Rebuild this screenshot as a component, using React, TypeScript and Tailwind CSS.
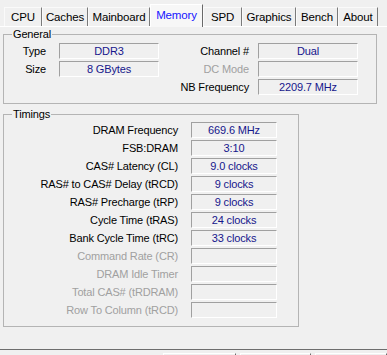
import * as React from "react";

const tabs = [
  { name: "CPU", w: "w-[38px]" },
  { name: "Caches", w: "w-[46px]" },
  { name: "Mainboard", w: "w-[62px]" },
  { name: "Memory", w: "w-[53px]", active: true },
  { name: "SPD", w: "w-[39px]" },
  { name: "Graphics", w: "w-[54px]" },
  { name: "Bench", w: "w-[42px]" },
  { name: "About", w: "w-[40px]" },
];

const general = [
  { left: "Type", leftValue: "DDR3", right: "Channel #", rightValue: "Dual" },
  { left: "Size", leftValue: "8 GBytes", right: "DC Mode", rightValue: "", rightDisabled: true },
  { left: "", leftValue: null, right: "NB Frequency", rightValue: "2209.7 MHz" },
];

const timings = [
  { label: "DRAM Frequency", value: "669.6 MHz" },
  { label: "FSB:DRAM", value: "3:10" },
  { label: "CAS# Latency (CL)", value: "9.0 clocks" },
  { label: "RAS# to CAS# Delay (tRCD)", value: "9 clocks" },
  { label: "RAS# Precharge (tRP)", value: "9 clocks" },
  { label: "Cycle Time (tRAS)", value: "24 clocks" },
  { label: "Bank Cycle Time (tRC)", value: "33 clocks" },
  { label: "Command Rate (CR)", value: "", disabled: true },
  { label: "DRAM Idle Timer", value: "", disabled: true },
  { label: "Total CAS# (tRDRAM)", value: "", disabled: true },
  { label: "Row To Column (tRCD)", value: "", disabled: true },
];

const ValueBox = ({ value, width }: { value: string; width: string }) => (
  <div
    className={`${width} flex h-[16px] items-center justify-center border border-t-[#a0a0a0] border-l-[#a0a0a0] border-r-white border-b-white leading-[14px] text-[#16168c]`}
  >
    {value}
  </div>
);

export default function App() {
  return (
    <div
      className="relative h-[355px] w-[387px] overflow-hidden bg-[#f0f0f0] text-[11px] leading-[14px] tracking-[-0.15px] text-black"
      style={{ fontFamily: '"Liberation Sans", Arial, sans-serif' }}
    >
      {/* Tabs */}
      <div className="flex h-[27px] items-end border-b border-white pl-[4px]">
        {tabs.map((t) =>
          t.active ? (
            <div
              key={t.name}
              className={`${t.w} relative z-10 -mb-[1px] flex h-[23px] items-start justify-center border-t border-l border-r border-t-white border-l-white border-r-[#696969] bg-[#f7f7f7] pt-[3px] text-[11.5px] text-[#1515ff]`}
            >
              {t.name}
            </div>
          ) : (
            <div
              key={t.name}
              className={`${t.w} flex h-[19px] items-start justify-center border-t border-l border-r border-t-[#fafafa] border-l-[#fafafa] border-r-[#7a7a7a] pt-[2px] text-[11.5px]`}
            >
              {t.name}
            </div>
          )
        )}
      </div>

      {/* General */}
      <fieldset className="ml-[3px] w-[374px] border border-[#b4b4b4] px-0 pt-[2px] pb-[8px]">
        <legend className="ml-[8px] px-[1px] leading-[14px]">General</legend>
        <div className="flex flex-col gap-[2px]">
          {general.map((r, i) => (
            <div key={i} className="flex h-[16px] items-center">
              <div className="w-[42px] text-right">{r.left}</div>
              <div className="ml-[13px] w-[100px]">
                {r.leftValue !== null && <ValueBox value={r.leftValue} width="w-[100px]" />}
              </div>
              <div className={`w-[90px] text-right ${r.rightDisabled ? "text-[#a0a0a0]" : ""}`}>
                {r.right}
              </div>
              <div className="ml-[9px]">
                <ValueBox value={r.rightValue} width="w-[100px]" />
              </div>
            </div>
          ))}
        </div>
      </fieldset>

      {/* Timings */}
      <fieldset className="mt-[3px] ml-[3px] w-[296px] border border-[#b4b4b4] px-0 pt-[1px] pb-[8px]">
        <legend className="ml-[8px] px-[1px] leading-[14px]">Timings</legend>
        <div className="flex flex-col gap-[2px]">
          {timings.map((r) => (
            <div key={r.label} className="flex h-[16px] items-center">
              <div
                className={`w-[174px] whitespace-nowrap text-right ${r.disabled ? "text-[#a0a0a0]" : ""}`}
              >
                {r.label}
              </div>
              <div className="ml-[13px]">
                <ValueBox value={r.value} width="w-[86px]" />
              </div>
            </div>
          ))}
        </div>
      </fieldset>

      {/* Bottom bar */}
      <div className="mt-[22px] h-[1px] w-full bg-[#6d6d6d]" />
      <div className="mt-[3px] flex gap-[4px] pl-[163px]">
        <div className="h-[10px] w-[74px] border-t border-l border-r border-t-white border-l-white border-r-[#696969]" />
        <div className="h-[10px] w-[73px] border-t border-l border-r border-t-white border-l-white border-r-[#696969]" />
        <div className="h-[10px] w-[73px] border-t border-l border-r border-t-white border-l-white border-r-[#696969]" />
      </div>
    </div>
  );
}
